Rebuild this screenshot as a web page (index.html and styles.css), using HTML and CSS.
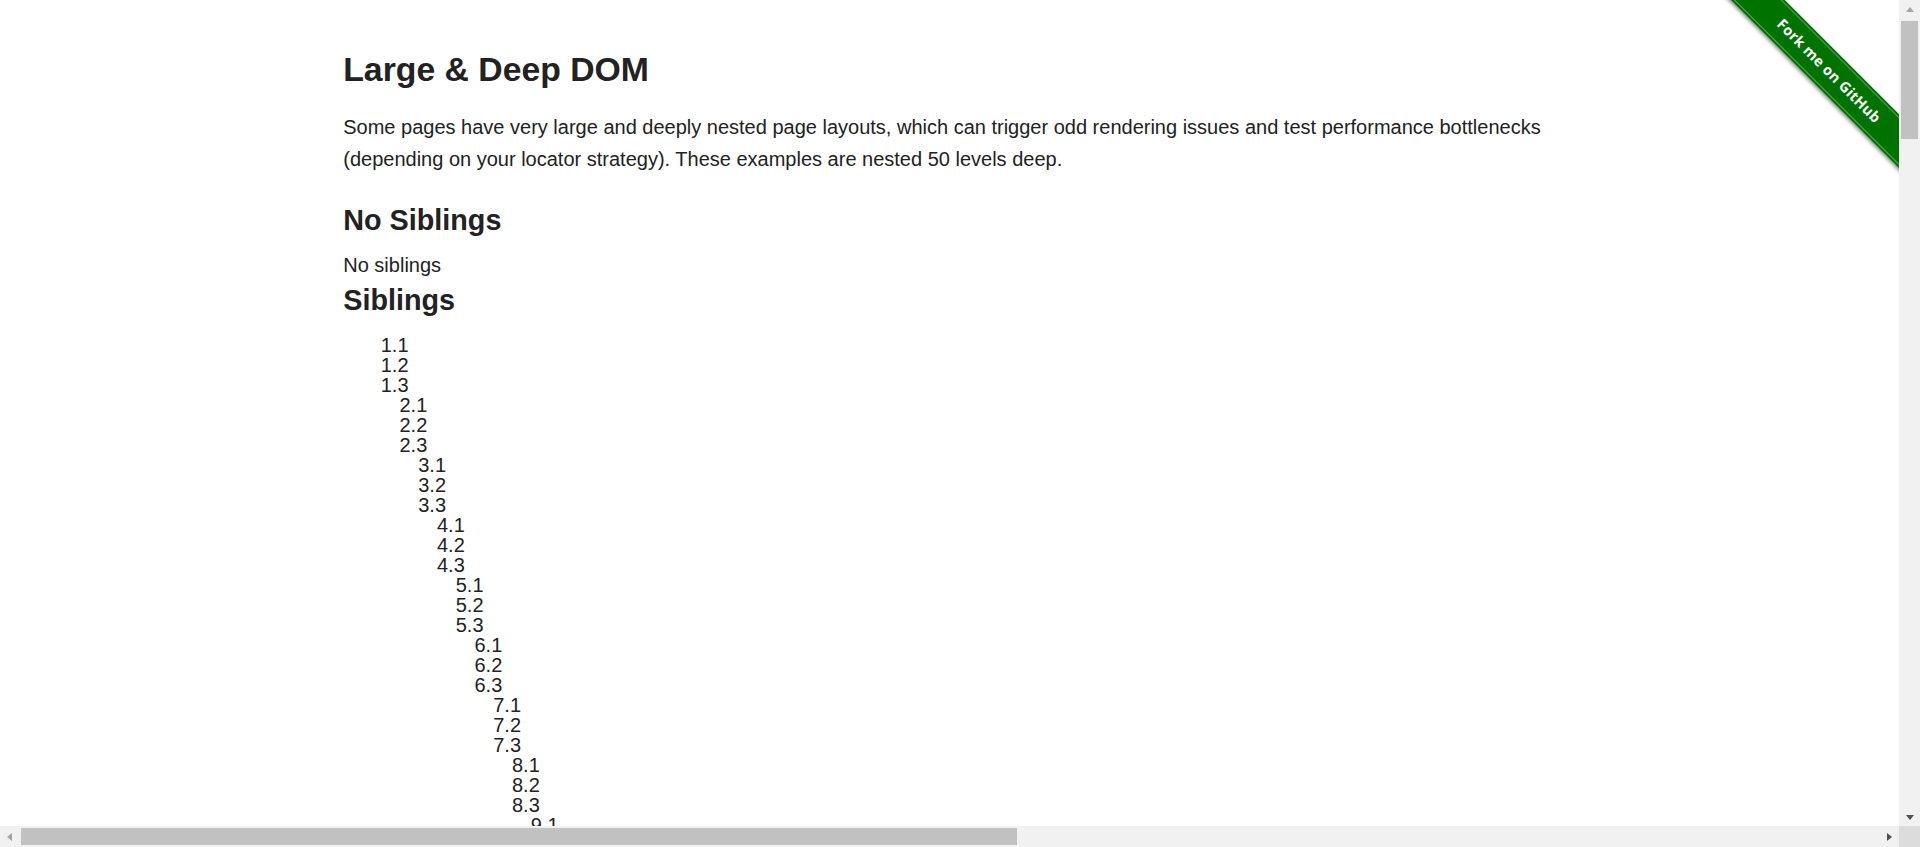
FILE: index.html
```html
<!DOCTYPE html>
<html lang="en">
<head>
<meta charset="utf-8">
<title>The Internet</title>
<link rel="stylesheet" href="styles.css">
</head>
<body>
<div class="window">
  <div class="viewport">
    <a class="ribbon" href="#"><span class="band">Fork me on GitHub</span></a>
    <div class="row">
      <div class="example">
        <h3>Large &amp; Deep DOM</h3>
        <p>Some pages have very large and deeply nested page layouts, which can trigger odd rendering issues and test performance bottlenecks (depending on your locator strategy). These examples are nested 50 levels deep.</p>
        <h4>No Siblings</h4>
        <div class="no-siblings"><div><div><div><div>No siblings</div></div></div></div></div>
        <h4>Siblings</h4>
        <div class="siblings">
          <div class="level"><div>1.1</div><div>1.2</div><div>1.3
          <div class="level"><div>2.1</div><div>2.2</div><div>2.3
          <div class="level"><div>3.1</div><div>3.2</div><div>3.3
          <div class="level"><div>4.1</div><div>4.2</div><div>4.3
          <div class="level"><div>5.1</div><div>5.2</div><div>5.3
          <div class="level"><div>6.1</div><div>6.2</div><div>6.3
          <div class="level"><div>7.1</div><div>7.2</div><div>7.3
          <div class="level"><div>8.1</div><div>8.2</div><div>8.3
          <div class="level"><div>9.1</div><div>9.2</div><div>9.3
          <div class="level"><div>10.1</div><div>10.2</div><div>10.3
          <div class="level"><div>11.1</div><div>11.2</div><div>11.3
          </div></div>
          </div></div>
          </div></div>
          </div></div>
          </div></div>
          </div></div>
          </div></div>
          </div></div>
          </div></div>
          </div></div>
          </div></div>
        </div>
      </div>
    </div>
  </div>
  <div class="vscroll">
    <div class="sb-btn"><span class="arr up"></span></div>
    <div class="v-track"><div class="v-thumb"></div></div>
    <div class="sb-btn"><span class="arr down"></span></div>
  </div>
  <div class="hscroll">
    <div class="sb-btn"><span class="arr left"></span></div>
    <div class="h-track"><div class="h-thumb"></div></div>
    <div class="sb-btn"><span class="arr right"></span></div>
  </div>
  <div class="corner"></div>
</div>
</body>
</html>
```
FILE: styles.css
```css
html, body {
  margin: 0;
  height: 100%;
}
body {
  font-family: "Liberation Sans", Arial, sans-serif;
  color: #222222;
  background: #ffffff;
  overflow: hidden;
}
*, *::before, *::after { box-sizing: border-box; }

.window {
  display: grid;
  grid-template-columns: 1fr 21px;
  grid-template-rows: 1fr 21px;
  height: 100vh;
}
.viewport {
  position: relative;
  overflow: hidden;
  background: #ffffff;
}
.row {
  max-width: 1250px;
  margin: 0 auto;
  padding: 46px 18.75px 0;
}
.example h3 {
  font-size: 33.75px;
  font-weight: bold;
  line-height: 47px;
  margin: 0 0 18px;
}
.example p {
  font-size: 20px;
  line-height: 32px;
  margin: 0 0 25px;
}
.example h4 {
  font-size: 28.75px;
  font-weight: bold;
  line-height: 40px;
  margin: 5px 0 15px;
}
.no-siblings {
  font-size: 20px;
  line-height: 20px;
}
.siblings {
  margin-left: 18.75px;
  font-size: 20px;
  line-height: 20px;
}
.level {
  margin-left: 18.75px;
}

/* GitHub ribbon */
.ribbon {
  position: absolute;
  top: 0;
  right: 0;
  width: 186px;
  height: 186px;
  overflow: hidden;
  text-decoration: none;
}
.band {
  position: absolute;
  left: -14.25px;
  top: 51.5px;
  width: 260px;
  height: 37.5px;
  background: #007200;
  color: #ffffff;
  font-family: "Open Sans", "DejaVu Sans", sans-serif;
  font-weight: 700;
  font-size: 14.5px;
  line-height: 37.5px;
  text-align: center;
  letter-spacing: 0.2px;
  transform: rotate(45deg);
  box-shadow: 0 2px 4px rgba(0, 0, 0, 0.45);
}
.band::before {
  content: "";
  position: absolute;
  left: 0;
  right: 0;
  top: 2px;
  bottom: 2px;
  border-top: 1px solid rgba(255, 255, 255, 0.35);
  border-bottom: 1px solid rgba(255, 255, 255, 0.35);
}

/* Scrollbars */
.vscroll {
  background: #f1f1f1;
  display: flex;
  flex-direction: column;
}
.hscroll {
  background: #f1f1f1;
  display: flex;
}
.corner {
  background: #dcdcdc;
}
.sb-btn {
  flex: 0 0 21px;
  height: 21px;
  display: flex;
  align-items: center;
  justify-content: center;
}
.v-track { flex: 1; }
.h-track { flex: 1; }
.v-thumb {
  height: 118px;
  margin: 0 2px;
  background: #c1c1c1;
}
.h-thumb {
  width: 996px;
  height: 17px;
  margin-top: 2px;
  background: #c1c1c1;
}
.arr {
  width: 0;
  height: 0;
  display: block;
}
.arr.up {
  border-left: 4.5px solid transparent;
  border-right: 4.5px solid transparent;
  border-bottom: 5px solid #a3a3a3;
  margin-top: -3px;
}
.arr.down {
  border-left: 4.5px solid transparent;
  border-right: 4.5px solid transparent;
  border-top: 5px solid #505050;
  margin-top: 3px;
}
.arr.left {
  border-top: 4.5px solid transparent;
  border-bottom: 4.5px solid transparent;
  border-right: 5px solid #a3a3a3;
  margin-left: -2px;
}
.arr.right {
  border-top: 4.5px solid transparent;
  border-bottom: 4.5px solid transparent;
  border-left: 5px solid #505050;
  margin-left: 2px;
}
```
